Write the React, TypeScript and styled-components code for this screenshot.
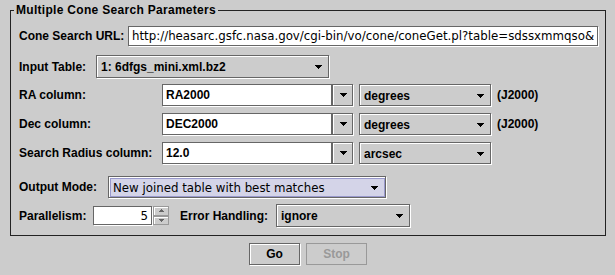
import { createGlobalStyle, styled } from "styled-components";

const GlobalStyle = createGlobalStyle`
  html, body {
    margin: 0;
    background: #cccccc;
  }
  body {
    font-family: "Liberation Sans", Arial, sans-serif;
    font-size: 12px;
    color: #000;
  }
  * {
    box-sizing: border-box;
  }
`;

const PLAIN = '"DejaVu Sans", sans-serif';
const BOLD = '"Liberation Sans", Arial, sans-serif';
const PLAIN_SIZE = 11.8;

const Page = styled.div`
  width: 615px;
  height: 275px;
  padding: 3px 9px 0 10px;
`;

const Group = styled.fieldset`
  margin: 0;
  min-width: 0;
  padding: 8px 7px 8px 8px;
  border: 1px solid #222;
`;

const Title = styled.legend`
  margin-left: -5px;
  padding: 0 2px;
  font-weight: bold;
  font-size: 12px;
  line-height: 15px;
  letter-spacing: 0.3px;
`;

const Row = styled.div<{ $top: number; $h: number }>`
  display: flex;
  align-items: center;
  height: ${({ $h }) => $h}px;
  margin-top: ${({ $top }) => $top}px;
`;

const Label = styled.span<{ $w: number; $left?: number }>`
  flex: none;
  width: ${({ $w }) => $w}px;
  margin-left: ${({ $left }) => $left ?? 0}px;
  font-weight: bold;
  white-space: nowrap;
`;

const Note = styled.span`
  margin-left: 6px;
  font-weight: bold;
`;

const TextField = styled.input<{ $w?: number; $h: number; $plain?: boolean; $right?: boolean }>`
  flex: ${({ $w }) => ($w ? "none" : "1")};
  width: ${({ $w }) => ($w ? `${$w}px` : "auto")};
  min-width: 0;
  height: ${({ $h }) => $h}px;
  margin: 0;
  padding: 0 3px;
  background: #fff;
  border: 1px solid #666;
  border-radius: 0;
  box-shadow: 1px 1px 0 #fff;
  outline: none;
  color: #000;
  font-family: ${({ $plain }) => ($plain ? PLAIN : BOLD)};
  font-weight: ${({ $plain }) => ($plain ? "normal" : "bold")};
  font-size: ${({ $plain }) => ($plain ? PLAIN_SIZE : 12)}px;
  text-align: ${({ $right }) => ($right ? "right" : "left")};
`;

const Combo = styled.div<{ $w: number; $h: number }>`
  flex: none;
  display: flex;
  width: ${({ $w }) => $w}px;
  height: ${({ $h }) => $h}px;
  padding: 1px 0 0 1px;
  background: #cccccc;
  border: 1px solid #666;
  box-shadow: 1px 1px 0 #fff, inset 1px 1px 0 #fff;
`;

const ComboInner = styled.div<{ $focus?: boolean }>`
  flex: 1;
  display: flex;
  align-items: center;
  padding: 0 6px 0 ${({ $focus }) => ($focus ? 2 : 3)}px;
  border: ${({ $focus }) => ($focus ? "1px solid #9999cc" : "none")};
  background: ${({ $focus }) => ($focus ? "#d4d4e8" : "transparent")};
`;

const ComboText = styled.span<{ $plain?: boolean }>`
  flex: 1;
  overflow: hidden;
  white-space: nowrap;
  font-family: ${({ $plain }) => ($plain ? PLAIN : BOLD)};
  font-weight: ${({ $plain }) => ($plain ? "normal" : "bold")};
  font-size: ${({ $plain }) => ($plain ? PLAIN_SIZE : 12)}px;
`;

const ArrowButton = styled.div<{ $w: number; $h: number }>`
  flex: none;
  display: flex;
  align-items: center;
  justify-content: center;
  width: ${({ $w }) => $w}px;
  height: ${({ $h }) => $h}px;
  background: #cccccc;
  border: 1px solid #666;
  box-shadow: 1px 1px 0 #fff, inset 1px 1px 0 #fff;
`;

const Spacer = styled.span`
  flex: none;
  width: 6px;
`;

const Spinner = styled.div`
  flex: none;
  display: flex;
  height: 19px;
`;

const SpinButtons = styled.div`
  display: flex;
  flex-direction: column;
  width: 16px;
  margin-left: 1px;
`;

const SpinButton = styled.div`
  flex: 1;
  display: flex;
  align-items: center;
  justify-content: center;
  background: #cccccc;
  border: 1px solid #999;
  box-shadow: inset 1px 1px 0 #fff;
`;

const ButtonBar = styled.div`
  display: flex;
  justify-content: center;
  gap: 6px;
  margin-top: 7px;
`;

const Button = styled.button<{ $w: number; $disabled?: boolean }>`
  width: ${({ $w }) => $w}px;
  height: 22px;
  margin: 0;
  padding: 0;
  background: #cccccc;
  border: 1px solid ${({ $disabled }) => ($disabled ? "#999" : "#666")};
  border-radius: 0;
  box-shadow: ${({ $disabled }) => ($disabled ? "none" : "1px 1px 0 #fff, inset 1px 1px 0 #fff")};
  color: ${({ $disabled }) => ($disabled ? "#999" : "#000")};
  font-family: ${BOLD};
  font-weight: bold;
  font-size: 12px;
`;

function DownArrow({ small }: { small?: boolean }) {
  const w = small ? 5 : 8;
  const h = small ? 3 : 4;
  return (
    <svg width={w} height={h} viewBox={`0 0 ${w} ${h}`} shapeRendering="crispEdges" style={{ flex: "none" }}>
      <polygon points={`0,0 ${w},0 ${w / 2},${h}`} fill={small ? "#666" : "#000"} />
    </svg>
  );
}

function UpArrow() {
  return (
    <svg width={5} height={3} viewBox="0 0 5 3" shapeRendering="crispEdges">
      <polygon points="0,3 5,3 2.5,0" fill="#666" />
    </svg>
  );
}

function Select({ w, h, value, plain, focus }: { w: number; h: number; value: string; plain?: boolean; focus?: boolean }) {
  return (
    <Combo $w={w} $h={h}>
      <ComboInner $focus={focus}>
        <ComboText $plain={plain}>{value}</ComboText>
        <DownArrow />
      </ComboInner>
    </Combo>
  );
}

function EditableSelect({ value }: { value: string }) {
  return (
    <>
      <TextField $w={170} $h={22} readOnly value={value} />
      <ArrowButton $w={21} $h={22}>
        <DownArrow />
      </ArrowButton>
    </>
  );
}

const columns = [
  { label: "RA column:", value: "RA2000", unit: "degrees", note: "(J2000)", top: 6 },
  { label: "Dec column:", value: "DEC2000", unit: "degrees", note: "(J2000)", top: 7 },
  { label: "Search Radius column:", value: "12.0", unit: "arcsec", note: "", top: 7 },
];

export default function App() {
  return (
    <Page>
      <GlobalStyle />
      <Group>
        <Title>Multiple Cone Search Parameters</Title>
        <Row $top={0} $h={20}>
          <Label $w={109}>Cone Search URL:</Label>
          <TextField
            $h={20}
            $plain
            readOnly
            value="http://heasarc.gsfc.nasa.gov/cgi-bin/vo/cone/coneGet.pl?table=sdssxmmqso&"
          />
        </Row>
        <Row $top={9} $h={23}>
          <Label $w={77}>Input Table:</Label>
          <Select w={233} h={23} value="1: 6dfgs_mini.xml.bz2" />
        </Row>
        {columns.map((c) => (
          <Row key={c.label} $top={c.top} $h={22}>
            <Label $w={143}>{c.label}</Label>
            <EditableSelect value={c.value} />
            <Spacer />
            <Select w={132} h={22} value={c.unit} />
            {c.note && <Note>{c.note}</Note>}
          </Row>
        ))}
        <Row $top={12} $h={22}>
          <Label $w={89}>Output Mode:</Label>
          <Select w={278} h={22} value="New joined table with best matches" plain focus />
        </Row>
        <Row $top={6} $h={23}>
          <Label $w={74}>Parallelism:</Label>
          <Spinner>
            <TextField $w={59} $h={19} $plain $right readOnly value="5" />
            <SpinButtons>
              <SpinButton>
                <UpArrow />
              </SpinButton>
              <SpinButton>
                <DownArrow small />
              </SpinButton>
            </SpinButtons>
          </Spinner>
          <Label $w={96} $left={11}>
            Error Handling:
          </Label>
          <Select w={134} h={23} value="ignore" />
        </Row>
      </Group>
      <ButtonBar>
        <Button $w={51}>Go</Button>
        <Button $w={61} $disabled>
          Stop
        </Button>
      </ButtonBar>
    </Page>
  );
}
